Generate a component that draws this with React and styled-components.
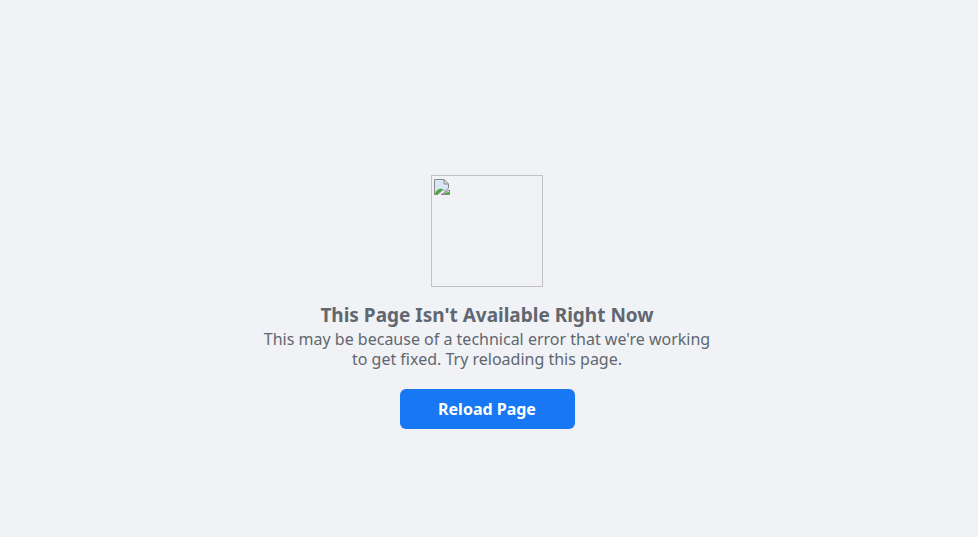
import React from 'react'
import styled, { createGlobalStyle } from 'styled-components'

const GlobalStyle = createGlobalStyle`
    html, body {
        margin: 0;
        padding: 0;
        background: #f0f2f5;
        font-family: "Noto Sans", "Open Sans", Arial, sans-serif;
    }
`

const Page = styled.div`
    min-height: 100vh;
    display: flex;
    flex-direction: column;
    align-items: center;
    padding: 175px 4px 0 0;
    box-sizing: border-box;
`
const ImageBox = styled.div`
    width: 112px;
    height: 112px;
    box-sizing: border-box;
    border: 1px solid #c2c2c2;
    padding: 2px;
`
const Title = styled.h2`
    margin: 16px 0 0;
    font-size: 19px;
    font-weight: 700;
    line-height: 24px;
    color: #606770;
`
const Message = styled.p`
    margin: 2px 0 0;
    width: 455px;
    text-align: center;
    font-size: 16px;
    line-height: 20px;
    color: #606770;
`
const ReloadButton = styled.button`
    margin-top: 20px;
    width: 175px;
    height: 40px;
    border: none;
    border-radius: 6px;
    background: #1877f2;
    color: #fff;
    font-family: inherit;
    font-size: 16px;
    font-weight: 700;
    cursor: pointer;
`

function BrokenImage() {
    return (
        <svg width="16" height="16" viewBox="0 0 16 16">
            <path d="M0.5 0.5 H10 L14.5 5 V9 L11 12.5 L9 10.5 L4 15.5 H0.5 Z" fill="#d8e6f5" stroke="#8a8a8a" />
            <path d="M10 0.5 V5 H14.5" fill="none" stroke="#8a8a8a" />
            <path d="M1 14.5 C3 10 7 9 9 10.5 L4 15 H1 Z" fill="#4aa83c" />
            <path d="M15.5 11 V15.5 H7 Z" fill="#d8e6f5" stroke="#8a8a8a" />
            <path d="M9 15 C11 14 13 13 15 13 V15 Z" fill="#4aa83c" />
        </svg>
    )
}

export default function App() {
    return (
        <>
            <GlobalStyle />
            <Page>
                <ImageBox>
                    <BrokenImage />
                </ImageBox>
                <Title>This Page Isn't Available Right Now</Title>
                <Message>
                    This may be because of a technical error that we're working to get fixed. Try reloading this page.
                </Message>
                <ReloadButton onClick={() => window.location.reload()}>Reload Page</ReloadButton>
            </Page>
        </>
    )
}
